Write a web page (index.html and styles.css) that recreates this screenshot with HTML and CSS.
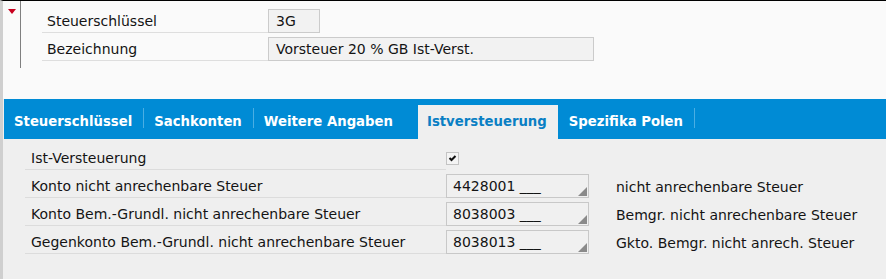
FILE: index.html
```html
<!DOCTYPE html>
<html lang="de">
<head>
    <meta charset="UTF-8">
    <title>Steuerschlüssel</title>
    <link rel="stylesheet" href="styles.css">
</head>
<body>
    <div class="page">
        <!-- Kopfbereich -->
        <div class="header">
            <div class="toggle">
                <span class="toggle-arrow"></span>
            </div>
            <div class="header-rows">
                <div class="hrow">
                    <div class="hlabel">Steuerschlüssel</div>
                    <div class="hfield short">3G</div>
                </div>
                <div class="hrow">
                    <div class="hlabel">Bezeichnung</div>
                    <div class="hfield long">Vorsteuer 20 % GB Ist-Verst.</div>
                </div>
            </div>
        </div>

        <!-- Reiter -->
        <ul class="tabs">
            <li class="tab sep">Steuerschlüssel</li>
            <li class="tab sep">Sachkonten</li>
            <li class="tab">Weitere Angaben</li>
            <li class="tab active">Istversteuerung</li>
            <li class="tab sep">Spezifika Polen</li>
        </ul>

        <!-- Inhalt des Reiters -->
        <div class="panel">
            <div class="row">
                <div class="label">Ist-Versteuerung</div>
                <div class="checkbox">
                    <svg width="9" height="8" viewBox="0 0 9 8">
                        <polyline points="1.5,4 3.5,6 7.5,2" fill="none" stroke="#111" stroke-width="2"/>
                    </svg>
                </div>
            </div>
            <div class="row">
                <div class="label">Konto nicht anrechenbare Steuer</div>
                <div class="field">4428001 ___</div>
                <div class="desc">nicht anrechenbare Steuer</div>
            </div>
            <div class="row">
                <div class="label">Konto Bem.-Grundl. nicht anrechenbare Steuer</div>
                <div class="field">8038003 ___</div>
                <div class="desc">Bemgr. nicht anrechenbare Steuer</div>
            </div>
            <div class="row">
                <div class="label">Gegenkonto Bem.-Grundl. nicht anrechenbare Steuer</div>
                <div class="field">8038013 ___</div>
                <div class="desc">Gkto. Bemgr. nicht anrech. Steuer</div>
            </div>
        </div>
    </div>
</body>
</html>
```

FILE: styles.css
```css
* {
    margin: 0;
    padding: 0;
    box-sizing: border-box;
}

body {
    font-family: "DejaVu Sans", Verdana, sans-serif;
    font-size: 14px;
    color: #141414;
    background: #efefef;
}

.page {
    height: 279px;
    border-top: 1px solid #000;
    border-left: 3px solid #cfcfcf;
    background: #efefef;
    overflow: hidden;
}

/* Kopfbereich */
.header {
    display: flex;
    height: 98px;
    background: #fafafa;
}

.toggle {
    width: 18px;
    height: 67px;
    border-right: 1px solid #7f7f7f;
    padding: 8px 0 0 5px;
}

.toggle-arrow {
    display: block;
    width: 0;
    height: 0;
    border-left: 4px solid transparent;
    border-right: 4px solid transparent;
    border-top: 5px solid #c8001e;
}

.header-rows {
    display: flex;
    flex-direction: column;
    gap: 4px;
    padding: 8px 0 0 21px;
}

.hrow {
    display: flex;
    height: 24px;
}

.hlabel {
    width: 226px;
    padding-left: 5px;
    line-height: 24px;
    border-bottom: 1px solid #dedede;
}

.hfield {
    height: 24px;
    line-height: 23px;
    padding-left: 7px;
    background: #f2f2f2;
    border: 1px solid #cbcbcb;
}

.hfield.short {
    width: 52px;
}

.hfield.long {
    width: 326px;
}

/* Reiter */
.tabs {
    list-style: none;
    display: flex;
    align-items: flex-end;
    height: 40px;
    margin-left: 1px;
    background: #008bd5;
}

.tab {
    height: 34px;
    line-height: 34px;
    padding: 0 12px 0 10px;
    font-size: 13.25px;
    font-weight: bold;
    color: #fff;
    position: relative;
}

.tab.sep::after {
    content: "";
    position: absolute;
    right: 0;
    top: 3px;
    height: 20px;
    border-right: 1px solid #4aaee3;
}

.tab.active {
    margin-left: 13px;
    margin-right: 1px;
    padding: 0 11px 0 9px;
    background: #efefef;
    color: #0a7fc4;
}

/* Inhalt */
.panel {
    display: flex;
    flex-direction: column;
    gap: 4px;
    padding: 7px 0 0 22px;
}

.row {
    display: flex;
    align-items: center;
    height: 24px;
}

.label {
    width: 421px;
    height: 24px;
    line-height: 24px;
    padding-left: 6px;
    border-bottom: 1px solid #dcdcdc;
}

.checkbox {
    width: 13px;
    height: 13px;
    border: 1px solid #c4c4c4;
    background: #f4f4f4;
    display: flex;
    align-items: center;
    justify-content: center;
}

.field {
    position: relative;
    width: 143px;
    height: 24px;
    line-height: 23px;
    padding-left: 6px;
    border: 1px solid #c8c8c8;
    background: #f0f0f0;
}

.field::after {
    content: "";
    position: absolute;
    right: 1px;
    bottom: 1px;
    width: 0;
    height: 0;
    border-left: 9px solid transparent;
    border-bottom: 9px solid #8a8a8a;
}

.desc {
    padding-left: 27px;
    padding-top: 1px;
}
```
